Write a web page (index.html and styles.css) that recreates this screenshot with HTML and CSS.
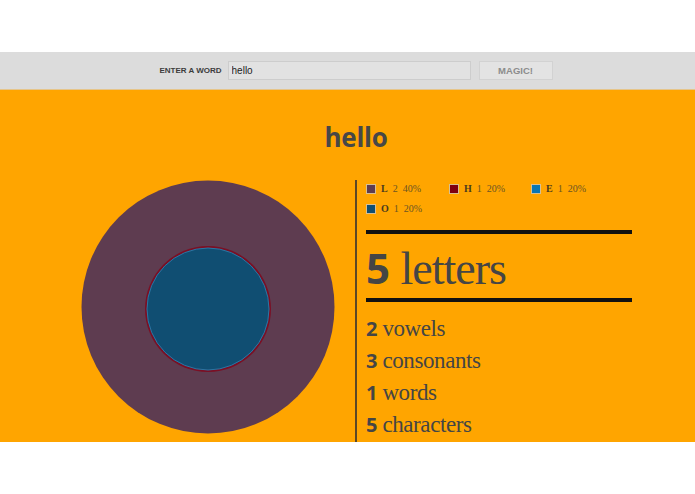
FILE: index.html
```html
<!DOCTYPE html>
<html>
<head>
<meta charset="utf-8">
<link rel="stylesheet" href="styles.css">
</head>
<body>
<div class="top-space"></div>
<header class="bar">
  <form class="word-form">
    <label class="label">ENTER A WORD</label>
    <input class="word-input" type="text" value="hello">
    <button class="magic" type="button">MAGIC!</button>
  </form>
</header>
<main class="main">
  <h1 class="title">hello</h1>
  <div class="content">
    <div class="chart">
      <svg width="254" height="254" viewBox="0 0 254 254">
        <circle cx="127" cy="127" r="126.5" fill="#5e3c50"/>
        <circle cx="127" cy="129" r="63" fill="#7b0f24"/>
        <circle cx="127" cy="129" r="61" fill="#104e72" stroke="#2b76a4" stroke-width="1"/>
      </svg>
    </div>
    <section class="stats">
      <div class="legend">
        <div class="item"><span class="sw sw-l"></span><b>L</b><span class="n">2</span><span class="n">40%</span></div>
        <div class="item"><span class="sw sw-h"></span><b>H</b><span class="n">1</span><span class="n">20%</span></div>
        <div class="item"><span class="sw sw-e"></span><b>E</b><span class="n">1</span><span class="n">20%</span></div>
        <div class="item"><span class="sw sw-o"></span><b>O</b><span class="n">1</span><span class="n">20%</span></div>
      </div>
      <div class="rule"></div>
      <div class="big"><b>5</b> letters</div>
      <div class="rule"></div>
      <ul class="lines">
        <li><b>2</b> vowels</li>
        <li><b>3</b> consonants</li>
        <li><b>1</b> words</li>
        <li><b>5</b> characters</li>
      </ul>
    </section>
  </div>
</main>
</body>
</html>
```
FILE: styles.css
```css
html, body {
  margin: 0;
  padding: 0;
  background: #ffffff;
}
body {
  width: 695px;
  height: 494px;
  overflow: hidden;
  font-family: "Liberation Sans", Arial, sans-serif;
}
.top-space {
  height: 52px;
}
.bar {
  height: 38px;
  background: #dcdcdc;
  border-bottom: 1px solid #e6c58a;
  box-sizing: border-box;
  display: flex;
  align-items: center;
  justify-content: center;
  padding-left: 17px;
}
.word-form {
  display: flex;
  align-items: center;
  margin: 0;
}
.label {
  font-size: 8px;
  font-weight: bold;
  color: #3c3c3c;
  margin-right: 6px;
}
.word-input {
  width: 243px;
  height: 19px;
  box-sizing: border-box;
  background: #e2e2e2;
  border: 1px solid #cdcdcd;
  padding: 0 3px;
  margin: 0;
  font-family: "Liberation Sans", Arial, sans-serif;
  font-size: 10px;
  color: #222;
  outline: none;
}
.magic {
  width: 74px;
  height: 19px;
  margin-left: 8px;
  box-sizing: border-box;
  background: #e3e3e3;
  border: 1px solid #d2d2d2;
  font-family: "Liberation Sans", Arial, sans-serif;
  font-size: 9.5px;
  font-weight: bold;
  color: #8c8c8c;
  padding: 0;
}
.main {
  height: 352px;
  overflow: hidden;
  background: #ffa500;
}
.title {
  margin: 0;
  padding-top: 32px;
  padding-left: 17px;
  text-align: center;
  font-family: "Open Sans", sans-serif;
  font-weight: bold;
  font-size: 26px;
  line-height: 30px;
  letter-spacing: -0.3px;
  color: #474747;
}
.content {
  display: flex;
  align-items: flex-start;
  margin-top: 28px;
}
.chart {
  padding-left: 81px;
  flex: none;
  line-height: 0;
}
.stats {
  margin-left: 20px;
  border-left: 2px solid #5a4828;
  padding-left: 9px;
  padding-top: 4px;
  width: 266px;
  min-height: 280px;
}
.legend {
  display: grid;
  grid-template-columns: 83px 82px 83px;
  grid-auto-rows: 20px;
  font-family: "Liberation Serif", "Times New Roman", serif;
  font-size: 10px;
  color: #6b5424;
}
.item {
  display: flex;
  align-items: center;
  height: 10px;
  line-height: 10px;
}
.item b {
  color: #4b3b1e;
  margin-left: 5px;
}
.item .n {
  margin-left: 5px;
}
.sw {
  width: 10px;
  height: 10px;
  box-sizing: border-box;
  border: 1px solid #d7bf93;
  flex: none;
}
.sw-l { background: #5e3c50; }
.sw-h { background: #7e0010; }
.sw-e { background: #0b76b3; }
.sw-o { background: #104e72; }
.rule {
  height: 4px;
  background: #111;
  margin-top: 6px;
}
.big {
  font-family: "Liberation Serif", "Times New Roman", serif;
  font-size: 46px;
  line-height: 59px;
  padding-top: 4px;
  color: #454545;
  letter-spacing: -1px;
  margin-bottom: -6px;
}
.big b {
  font-family: "Open Sans", sans-serif;
  font-size: 42px;
  letter-spacing: 0;
}
.lines {
  list-style: none;
  margin: 11px 0 0;
  padding: 0;
  font-family: "Liberation Serif", "Times New Roman", serif;
  font-size: 23px;
  line-height: 32px;
  color: #454545;
  letter-spacing: -0.4px;
}
.lines b {
  font-family: "Open Sans", sans-serif;
  font-size: 20px;
}
```
